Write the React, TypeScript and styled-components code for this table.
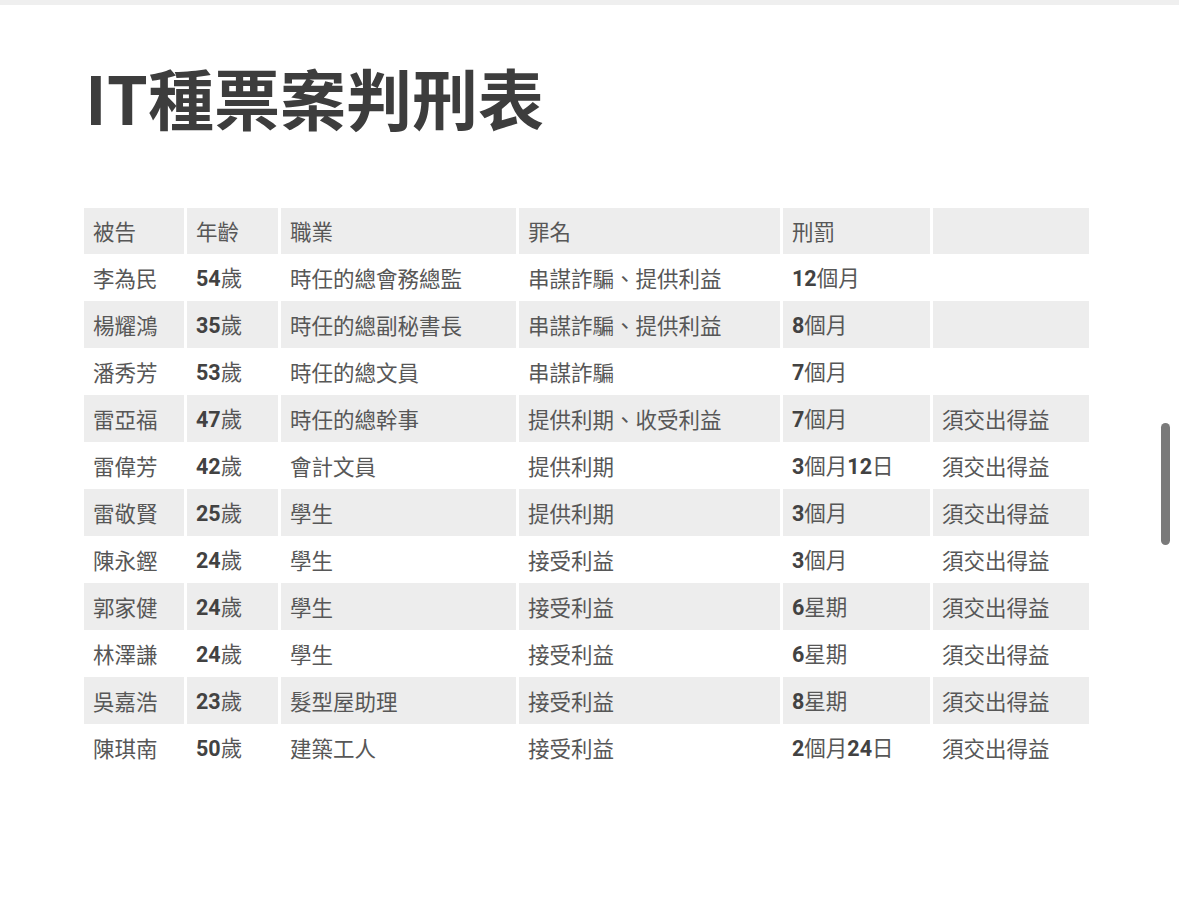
import React from 'react';
import styled, { createGlobalStyle } from 'styled-components';

const GlobalStyle = createGlobalStyle`
  html, body {
    margin: 0;
    padding: 0;
    background: #ffffff;
  }
  body {
    font-family: "Noto Sans CJK TC", "Noto Sans", sans-serif;
  }
`;

const Page = styled.div`
  position: relative;
  width: 1179px;
  height: 909px;
  overflow: hidden;
  background: #fff;
  border-top: 5px solid #efefef;
  box-sizing: border-box;
`;

const Content = styled.div`
  padding: 47px 0 0 85px;
`;

const Title = styled.h1`
  margin: 0 0 68px 0;
  font-size: 66px;
  line-height: 88px;
  font-weight: 700;
  color: #3d3d3d;
`;

const Table = styled.table`
  border-collapse: separate;
  border-spacing: 3px 0;
  margin-left: -4px;
  table-layout: fixed;
  width: 1011px;
`;

const Row = styled.tr<{ $shade: boolean }>`
  background: ${(p) => (p.$shade ? '#ededed' : '#ffffff')};
`;

const Cell = styled.td`
  box-sizing: border-box;
  height: 47px;
  padding: 0 0 0 9px;
  font-size: 21.5px;
  line-height: 24px;
  color: #575757;
  white-space: nowrap;
  vertical-align: middle;
  overflow: hidden;
`;

const HeadCell = styled(Cell).attrs({ as: 'th' })`
  font-weight: 400;
  text-align: left;
  height: 46px;
`;

const Num = styled.span`
  font-family: Roboto, "Noto Sans CJK TC", sans-serif;
  font-weight: 700;
  color: #424242;
  line-height: 24px;
`;

const Scrollbar = styled.div`
  position: absolute;
  right: 9px;
  top: 418px;
  width: 9px;
  height: 122px;
  border-radius: 5px;
  background: #7a7a7a;
`;

const widths = [100, 91, 235, 261, 147, 156];
const headers = ['被告', '年齡', '職業', '罪名', '刑罰', ''];

const rows = [
  ['李為民', '54歲', '時任的總會務總監', '串謀詐騙、提供利益', '12個月', ''],
  ['楊耀鴻', '35歲', '時任的總副秘書長', '串謀詐騙、提供利益', '8個月', ''],
  ['潘秀芳', '53歲', '時任的總文員', '串謀詐騙', '7個月', ''],
  ['雷亞福', '47歲', '時任的總幹事', '提供利期、收受利益', '7個月', '須交出得益'],
  ['雷偉芳', '42歲', '會計文員', '提供利期', '3個月12日', '須交出得益'],
  ['雷敬賢', '25歲', '學生', '提供利期', '3個月', '須交出得益'],
  ['陳永鏗', '24歲', '學生', '接受利益', '3個月', '須交出得益'],
  ['郭家健', '24歲', '學生', '接受利益', '6星期', '須交出得益'],
  ['林澤謙', '24歲', '學生', '接受利益', '6星期', '須交出得益'],
  ['吳嘉浩', '23歲', '髮型屋助理', '接受利益', '8星期', '須交出得益'],
  ['陳琪南', '50歲', '建築工人', '接受利益', '2個月24日', '須交出得益'],
];

// 數字部分用粗體顯示
const renderText = (text: string) =>
  text.split(/(\d+)/).map((part, i) =>
    /^\d+$/.test(part) ? <Num key={i}>{part}</Num> : <React.Fragment key={i}>{part}</React.Fragment>
  );

const App = () => {
  return (
    <Page>
      <GlobalStyle />
      <Content>
        <Title>IT種票案判刑表</Title>
        <Table>
          <colgroup>
            {widths.map((w, i) => (
              <col key={i} style={{ width: w }} />
            ))}
          </colgroup>
          <thead>
            <Row $shade>
              {headers.map((h, i) => (
                <HeadCell key={i}>{h}</HeadCell>
              ))}
            </Row>
          </thead>
          <tbody>
            {rows.map((r, ri) => (
              <Row key={ri} $shade={ri % 2 === 1}>
                {r.map((c, ci) => (
                  <Cell key={ci}>{renderText(c)}</Cell>
                ))}
              </Row>
            ))}
          </tbody>
        </Table>
      </Content>
      <Scrollbar />
    </Page>
  );
};

export default App;
